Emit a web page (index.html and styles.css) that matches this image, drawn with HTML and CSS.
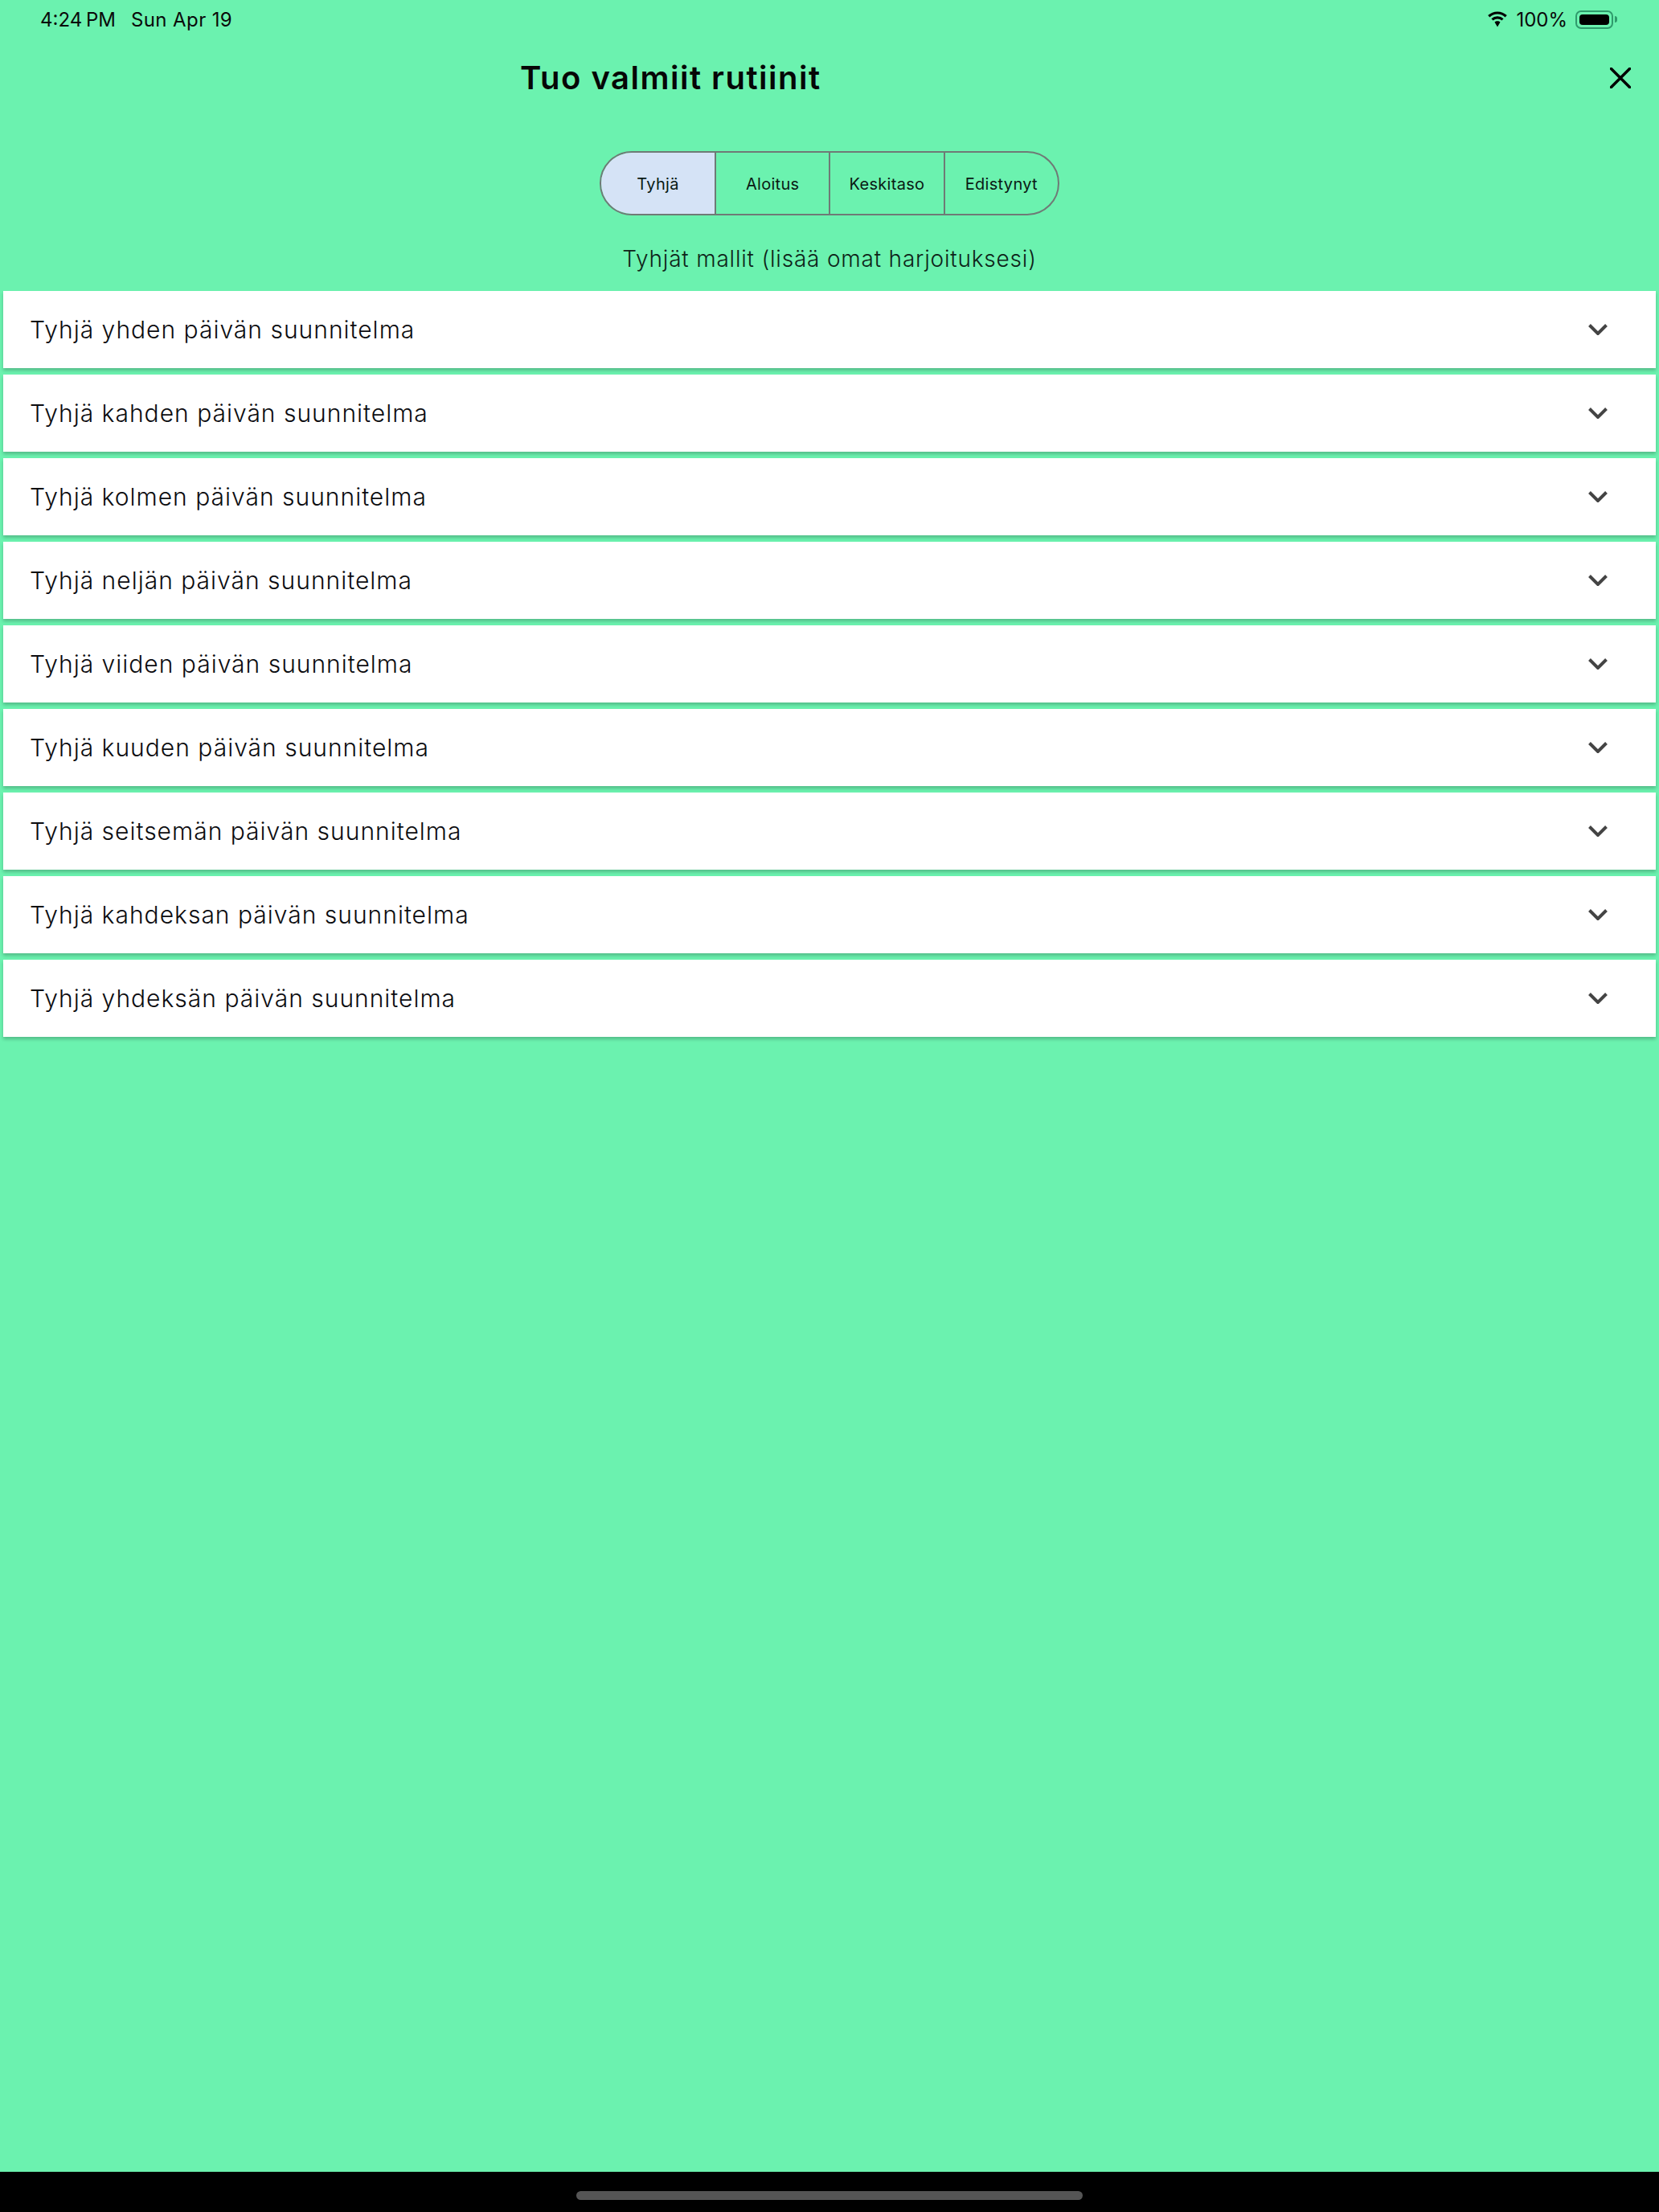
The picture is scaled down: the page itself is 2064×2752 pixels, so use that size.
FILE: index.html
```html
<!DOCTYPE html>
<html lang="fi">
<head>
    <meta charset="UTF-8">
    <title>Tuo valmiit rutiinit</title>
    <link rel="stylesheet" href="styles.css">
</head>
<body>
    <div class="screen">
        <div class="status-bar">
            <div class="status-left">
                <span class="status-time">4:24 PM</span>
                <span class="status-date">Sun Apr 19</span>
            </div>
            <div class="status-right">
                <svg class="wifi" width="28" height="20" viewBox="0 0 28 20">
                    <path d="M14 3.6c3.7 0 7 1.4 9.6 3.8l2.2-2.3A17 17 0 0 0 14 .4 17 17 0 0 0 2.200 5.100l2.200 2.300A14 14 0 0 1 14 3.600z"/>
                    <path d="M14 9.500c2.100 0 4 .8 5.400 2.100l2.200-2.300A11 11 0 0 0 14 6.300a11 11 0 0 0-7.600 3l2.200 2.300A7.900 7.900 0 0 1 14 9.500z"/>
                    <path d="M14 12.200c-1.400 0-2.600.5-3.500 1.400L14 19.600l3.500-6c-.9-.9-2.100-1.400-3.500-1.400z"/>
                </svg>
                <span class="battery-text">100%</span>
                <div class="battery"><div class="battery-fill"></div></div>
                <div class="battery-nub"></div>
            </div>
        </div>

        <div class="title-row">
            <h1>Tuo valmiit rutiinit</h1>
            <svg class="close" width="26" height="26" viewBox="0 0 26 26">
                <path d="M1.500 1.500L24.500 24.500M24.500 1.500L1.500 24.500"/>
            </svg>
        </div>

        <div class="segments">
            <div class="segment active">Tyhjä</div>
            <div class="segment">Aloitus</div>
            <div class="segment">Keskitaso</div>
            <div class="segment">Edistynyt</div>
        </div>

        <p class="subtitle">Tyhjät mallit (lisää omat harjoituksesi)</p>

        <div class="plans">
            <div class="plan"><span>Tyhjä yhden päivän suunnitelma</span><svg class="chevron" width="24" height="14" viewBox="0 0 24 14"><path d="M1.500 1.500L12 12L22.500 1.500"/></svg></div>
            <div class="plan"><span>Tyhjä kahden päivän suunnitelma</span><svg class="chevron" width="24" height="14" viewBox="0 0 24 14"><path d="M1.500 1.500L12 12L22.500 1.500"/></svg></div>
            <div class="plan"><span>Tyhjä kolmen päivän suunnitelma</span><svg class="chevron" width="24" height="14" viewBox="0 0 24 14"><path d="M1.500 1.500L12 12L22.500 1.500"/></svg></div>
            <div class="plan"><span>Tyhjä neljän päivän suunnitelma</span><svg class="chevron" width="24" height="14" viewBox="0 0 24 14"><path d="M1.500 1.500L12 12L22.500 1.500"/></svg></div>
            <div class="plan"><span>Tyhjä viiden päivän suunnitelma</span><svg class="chevron" width="24" height="14" viewBox="0 0 24 14"><path d="M1.500 1.500L12 12L22.500 1.500"/></svg></div>
            <div class="plan"><span>Tyhjä kuuden päivän suunnitelma</span><svg class="chevron" width="24" height="14" viewBox="0 0 24 14"><path d="M1.500 1.500L12 12L22.500 1.500"/></svg></div>
            <div class="plan"><span>Tyhjä seitsemän päivän suunnitelma</span><svg class="chevron" width="24" height="14" viewBox="0 0 24 14"><path d="M1.500 1.500L12 12L22.500 1.500"/></svg></div>
            <div class="plan"><span>Tyhjä kahdeksan päivän suunnitelma</span><svg class="chevron" width="24" height="14" viewBox="0 0 24 14"><path d="M1.500 1.500L12 12L22.500 1.500"/></svg></div>
            <div class="plan"><span>Tyhjä yhdeksän päivän suunnitelma</span><svg class="chevron" width="24" height="14" viewBox="0 0 24 14"><path d="M1.500 1.500L12 12L22.500 1.500"/></svg></div>
        </div>

        <div class="home-area">
            <div class="home-bar"></div>
        </div>
    </div>
</body>
</html>
```

FILE: styles.css
```css
html, body {
    margin: 0;
    padding: 0;
}
body {
    font-family: Inter, "Liberation Sans", sans-serif;
    background-color: #6bf2af;
}
.screen {
    display: flex;
    flex-direction: column;
    height: 2752px;
    overflow: hidden;
}
.status-bar {
    display: flex;
    justify-content: space-between;
    align-items: center;
    height: 48px;
    padding: 0 52px 0 50px;
    font-size: 24px;
    color: #0a0a0a;
}
.status-left {
    display: flex;
    gap: 19px;
}
.status-time {
    word-spacing: -2px;
}
.status-date {
    letter-spacing: 0.400px;
}
.status-right {
    display: flex;
    align-items: center;
}
.wifi {
    fill: #000;
    margin-right: 9px;
}
.battery-text {
    margin-right: 10px;
}
.battery {
    box-sizing: border-box;
    width: 47px;
    height: 23px;
    padding: 3px;
    border: 2px solid #2f9a6c;
    border-radius: 7px;
}
.battery-fill {
    height: 100%;
    background: #000;
    border-radius: 4px;
}
.battery-nub {
    width: 3px;
    height: 8px;
    margin-left: 2px;
    background: #2f9a6c;
    border-radius: 0 3px 3px 0;
}
.title-row {
    display: flex;
    justify-content: space-between;
    align-items: center;
    height: 98px;
    padding: 0 35px 0 647px;
}
.title-row h1 {
    margin: 0;
    font-size: 40px;
    font-weight: 600;
    line-height: 46px;
    letter-spacing: 1.500px;
    color: #060606;
}
.close {
    fill: none;
    stroke: #000;
    stroke-width: 3.500;
    stroke-linecap: round;
}
.segments {
    display: flex;
    align-self: center;
    box-sizing: border-box;
    width: 572px;
    height: 80px;
    margin-top: 42px;
    border: 2px solid #6f7a76;
    border-radius: 40px;
    overflow: hidden;
}
.segment {
    display: flex;
    flex: 1 1 0;
    align-items: center;
    justify-content: center;
    box-sizing: border-box;
    padding-top: 2px;
    font-size: 20px;
    letter-spacing: 0.300px;
    color: #0a1a14;
    border-left: 2px solid #6f7a76;
}
.segment:first-child {
    flex: 0 0 141px;
    border-left: none;
}
.segment.active {
    background: #d5e3f6;
}
.subtitle {
    margin: 0;
    padding-top: 37px;
    height: 57px;
    text-align: center;
    font-size: 28px;
    font-weight: 300;
    line-height: 34px;
    letter-spacing: 0.800px;
    color: #0e2419;
}
.plans {
    display: flex;
    flex-direction: column;
    gap: 8px;
    padding: 0 4px;
}
.plan {
    display: flex;
    justify-content: space-between;
    align-items: center;
    height: 96px;
    padding: 0 60px 0 33px;
    font-size: 30px;
    font-weight: 300;
    letter-spacing: 1px;
    color: #0c0c10;
    background: #fff;
    box-shadow: 0 3px 4px rgba(0, 0, 0, 0.22);
}
.chevron {
    fill: none;
    stroke: #444;
    stroke-width: 4;
}
.home-area {
    display: flex;
    justify-content: center;
    box-sizing: border-box;
    height: 50px;
    margin-top: auto;
    padding-top: 24px;
    background: #000;
}
.home-bar {
    width: 630px;
    height: 11px;
    background: #555;
    border-radius: 6px;
}
```
